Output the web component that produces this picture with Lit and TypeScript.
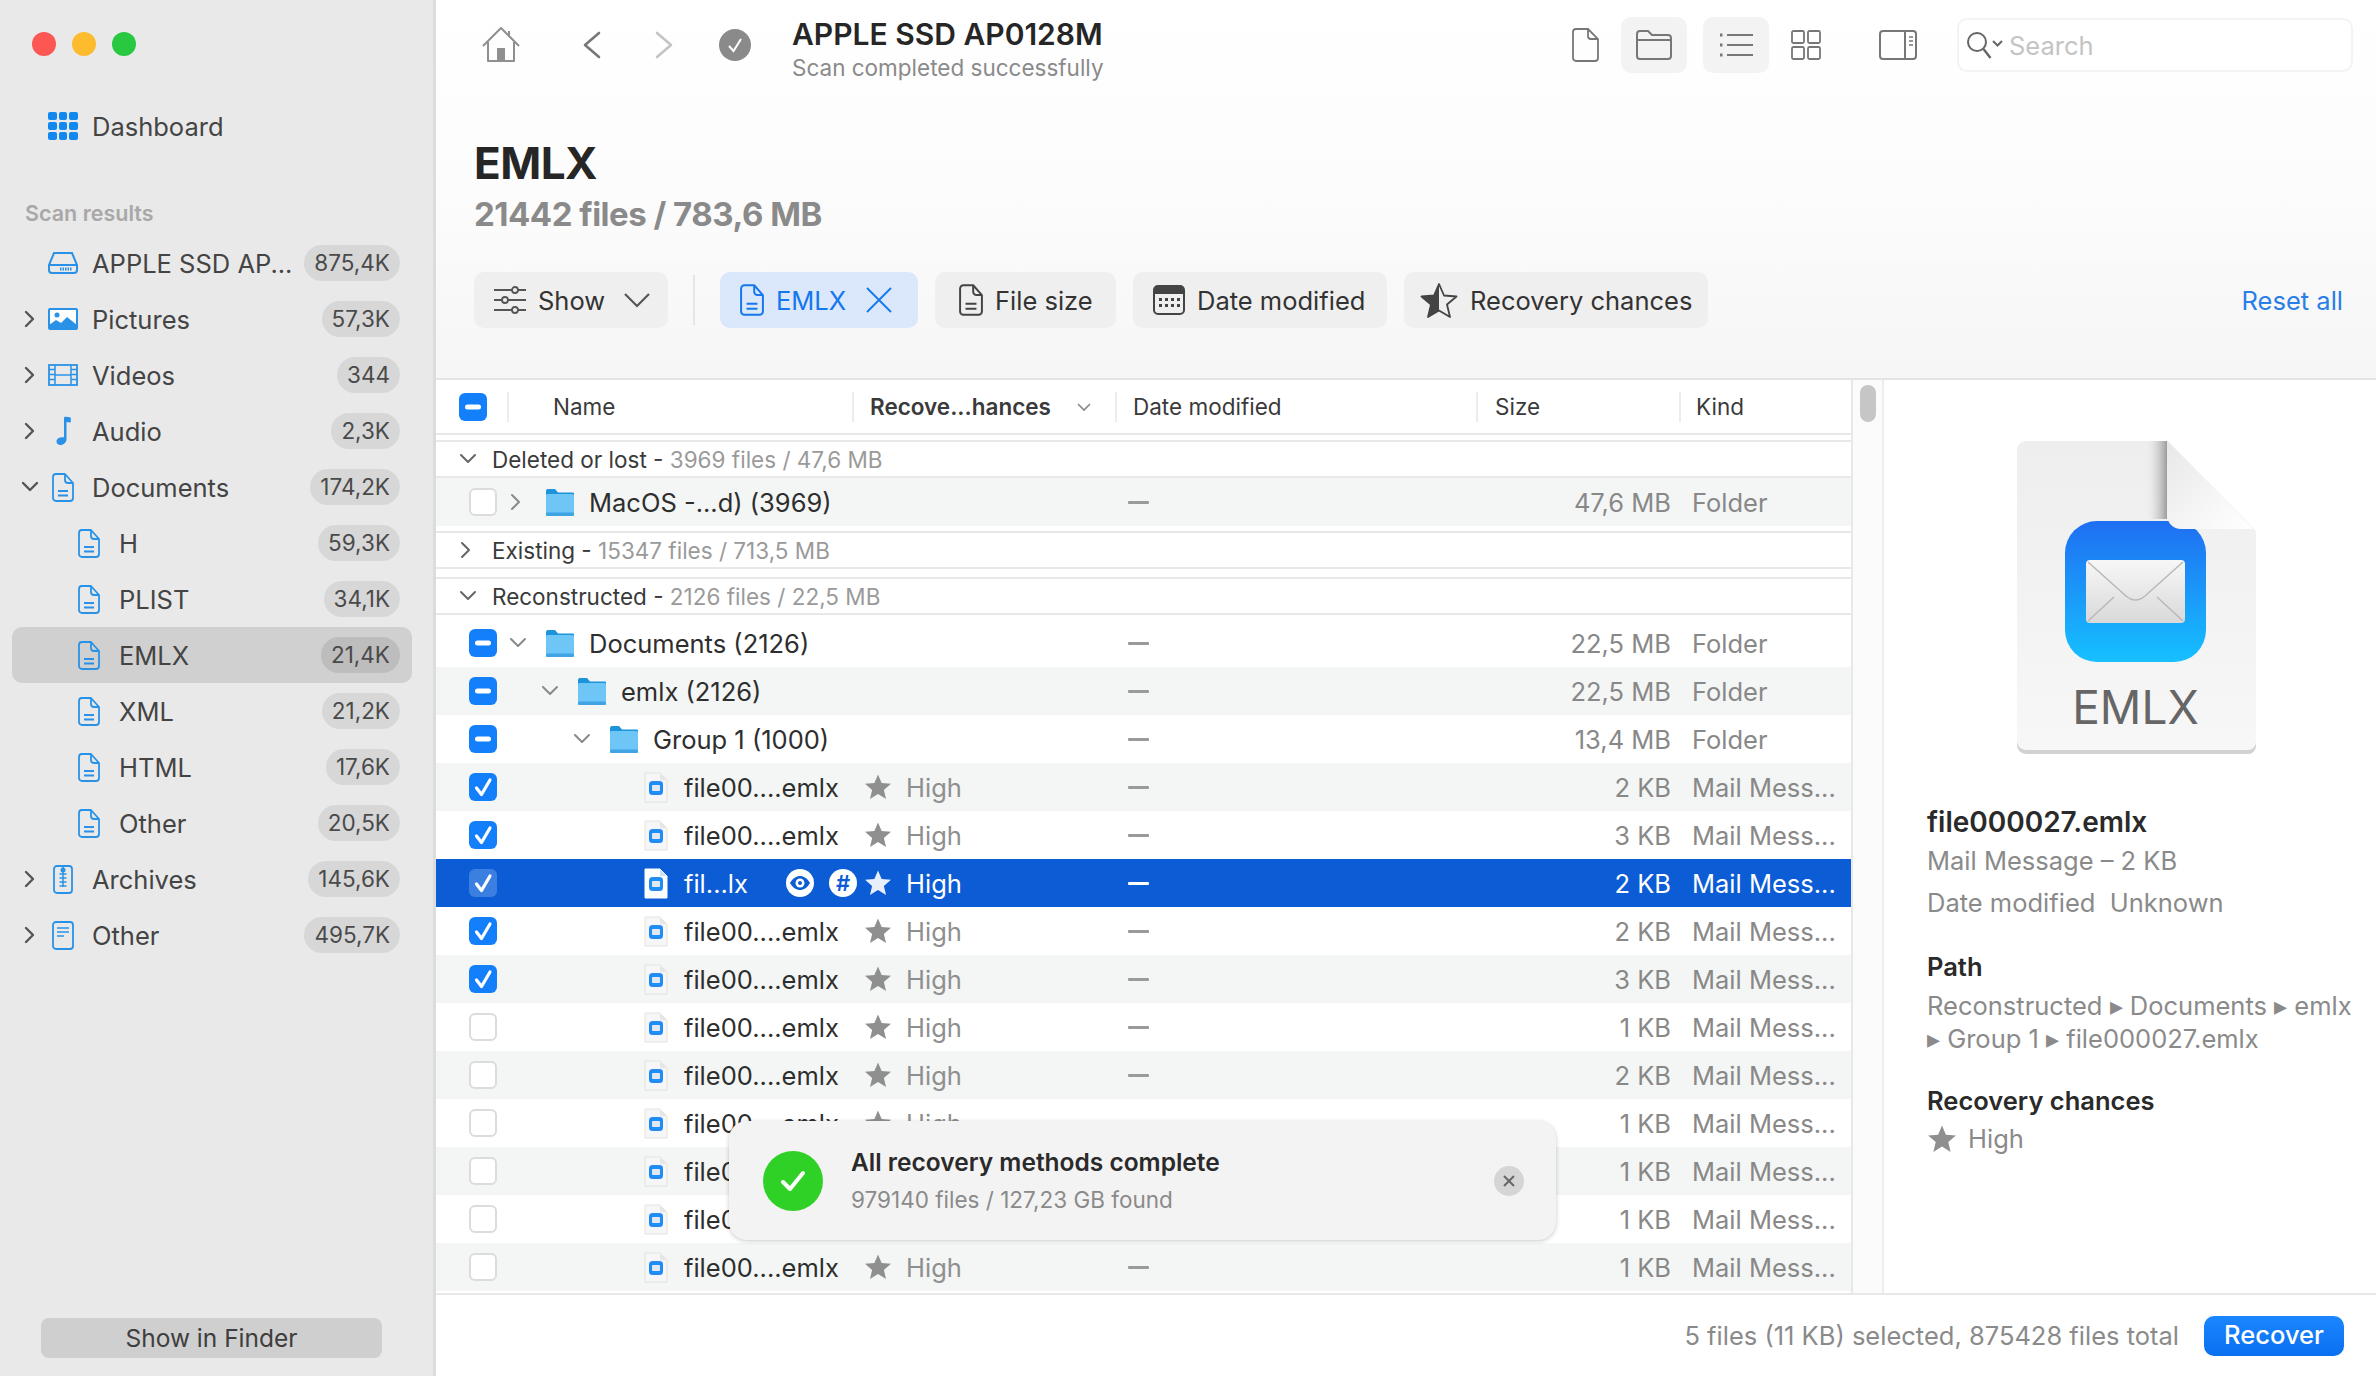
import { LitElement, html, css, svg } from "lit";
import { customElement } from "lit/decorators.js";

const chevR = (c = "#555", w = 2.4) => html`<svg class="chev" width="14" height="18" viewBox="0 0 14 18"><path d="M3 2l7 7-7 7" fill="none" stroke=${c} stroke-width=${w} stroke-linecap="round" stroke-linejoin="round"/></svg>`;
const chevD = (c = "#555", w = 2.4) => html`<svg class="chev" width="18" height="14" viewBox="0 0 18 14"><path d="M2 3l7 7 7-7" fill="none" stroke=${c} stroke-width=${w} stroke-linecap="round" stroke-linejoin="round"/></svg>`;
const docLines = (c = "#2a92e6", w = 22, h = 29) => html`<svg width=${w} height=${h} viewBox="0 0 22 29"><path d="M4 1h9l8 9v15a3 3 0 0 1-3 3H4a3 3 0 0 1-3-3V4a3 3 0 0 1 3-3zM13 1v6a3 3 0 0 0 3 3h5M6 18h10M6 22.500h10" fill="none" stroke=${c} stroke-width="1.800" stroke-linejoin="round"/></svg>`;
const star = (c = "#8f8f8f", s = 30) => html`<svg width=${s} height=${s} viewBox="0 0 30 30"><path d="M15 1.500l3.900 9.300 10 .8-7.600 6.500 2.300 9.800L15 22.600 6.400 27.900l2.300-9.800L1.100 11.600l10-.8z" fill=${c}/></svg>`;
const folder = () => html`<svg width="30" height="29" viewBox="0 0 30 29"><path d="M1 3a2 2 0 0 1 2-2h7l3 3.500h15a1 1 0 0 1 1 1V10H1z" fill="#1d93dc"/><rect x="1" y="6" width="28" height="21" rx="1.500" fill="#6ec6f6"/><rect x="1" y="24.500" width="28" height="3.500" rx="1" fill="#3ea4e4"/></svg>`;
const mailDoc = (sel = false) => html`<svg width="24" height="31" viewBox="0 0 24 31"><path d="M1 1h15l7 7v22H1z" fill=${sel ? "#fff" : "#f6f6f6"} stroke=${sel ? "#fff" : "#e2e2e2"} stroke-width="1"/><path d="M16 1v7h7z" fill=${sel ? "#cfe0fa" : "#e6e6e6"}/><rect x="5" y="9" width="14" height="14" rx="3.500" fill="#1f8df2"/><rect x="8" y="13" width="8" height="6" rx="1" fill="#dfe9f4"/></svg>`;

type Row = { name: string; depth?: number; kind: "folder" | "file" | "sel"; check: "none" | "mix" | "on"; exp?: "r" | "d"; alt?: boolean; size: string; rec?: boolean; cut?: boolean };

const cb = (s: string, dim = false) =>
  s === "none"
    ? html`<span class="cb off"></span>`
    : s === "mix"
    ? html`<span class="cb on"><svg width="16" height="6" viewBox="0 0 16 6"><rect x="0" y="0.500" width="16" height="5" rx="2.500" fill="#fff"/></svg></span>`
    : html`<span class="cb on ${dim ? "dim" : ""}"><svg width="20" height="20" viewBox="0 0 20 20"><path d="M3.500 11l5 6.500L17 3" fill="none" stroke="#fff" stroke-width="3.200" stroke-linecap="round" stroke-linejoin="round"/></svg></span>`;

const sideRows: { label: string; n: string; icon: string; chev?: "r" | "d"; sub?: boolean; active?: boolean }[] = [
  { label: "APPLE SSD AP...", n: "875,4K", icon: "disk" },
  { label: "Pictures", n: "57,3K", icon: "pic", chev: "r" },
  { label: "Videos", n: "344", icon: "vid", chev: "r" },
  { label: "Audio", n: "2,3K", icon: "aud", chev: "r" },
  { label: "Documents", n: "174,2K", icon: "doc", chev: "d" },
  { label: "H", n: "59,3K", icon: "doc", sub: true },
  { label: "PLIST", n: "34,1K", icon: "doc", sub: true },
  { label: "EMLX", n: "21,4K", icon: "doc", sub: true, active: true },
  { label: "XML", n: "21,2K", icon: "doc", sub: true },
  { label: "HTML", n: "17,6K", icon: "doc", sub: true },
  { label: "Other", n: "20,5K", icon: "doc", sub: true },
  { label: "Archives", n: "145,6K", icon: "zip", chev: "r" },
  { label: "Other", n: "495,7K", icon: "oth", chev: "r" },
];

const sideIcon = (k: string) => {
  const B = "#2a92e6";
  switch (k) {
    case "disk": return html`<svg width="30" height="24" viewBox="0 0 30 24"><path d="M6 2h18l5 12v5a3 3 0 0 1-3 3H4a3 3 0 0 1-3-3v-5zM1.500 14h27" fill="none" stroke=${B} stroke-width="2"/><path d="M12 18h12" stroke=${B} stroke-width="3" stroke-dasharray="1.500 1"/></svg>`;
    case "pic": return html`<svg width="30" height="22" viewBox="0 0 30 22"><rect x="1" y="1" width="28" height="20" rx="1" fill="#fff" stroke=${B} stroke-width="2"/><circle cx="9" cy="7" r="2.500" fill=${B}/><path d="M1 21v-4l7-5 5 3 6-6 10 8v4z" fill=${B}/></svg>`;
    case "vid": return html`<svg width="30" height="22" viewBox="0 0 30 22"><rect x="1" y="1" width="28" height="20" fill="none" stroke=${B} stroke-width="1.800"/><path d="M7 1v20M23 1v20M7 11h16M1 5.500h6M1 10.500h6M1 15.500h6M23 5.500h6M23 10.500h6M23 15.500h6" stroke=${B} stroke-width="1.500"/></svg>`;
    case "aud": return html`<svg width="30" height="30" viewBox="0 0 30 30"><path d="M16 2c0-1 1-1.500 2-1.300l4 .6c.6.100.8.600.8 1.200v3.200c0 .7-.5 1-1.200.9L18.500 6v17c0 3.500-3 6-6 6-2.500 0-4-1.500-4-3.500 0-3 3-4.500 7.500-4.300z" fill=${B}/></svg>`;
    case "doc": return docLines(B);
    case "zip": return html`<svg width="20" height="29" viewBox="0 0 20 29"><rect x="1" y="1" width="18" height="27" rx="3" fill="none" stroke=${B} stroke-width="1.800"/><path d="M10 1v21M6.500 9h7M6.500 13h7M6.500 17h7M6.500 21h7" stroke=${B} stroke-width="1.500"/><circle cx="10" cy="5" r="2.500" fill=${B}/></svg>`;
    default: return html`<svg width="22" height="29" viewBox="0 0 22 29"><rect x="1" y="1" width="20" height="27" rx="3" fill="none" stroke=${B} stroke-width="1.800"/><path d="M5 7h12M5 11h12M5 15h7" stroke=${B} stroke-width="1.600"/></svg>`;
  }
};

const fileRow = (alt: boolean, check: string, size: string): Row => ({ name: "file00....emlx", kind: "file", depth: 3, check: check as Row["check"], alt, size, rec: true });

@customElement("app-root")
export class AppRoot extends LitElement {
  static styles = css`
    :host { display: block; width: 2376px; height: 1376px; overflow: hidden; font-family: Inter, "Liberation Sans", sans-serif; color: #2c2c2c; background: #fff; }
    * { box-sizing: border-box; }
    svg { display: block; flex: none; }
    .app { display: flex; height: 100%; }
    .side { width: 436px; flex: none; background: #e9e9e9; border-right: 3px solid #dcdcdc; display: flex; flex-direction: column; }
    .lights { display: flex; gap: 16px; margin: 32px 0 0 32px; }
    .lights i { width: 24px; height: 24px; border-radius: 50%; display: block; }
    .dash { display: flex; align-items: center; height: 56px; margin-top: 42px; padding-left: 48px; gap: 14px; font-size: 25.500px; color: #444; }
    .grid9 { width: 30px; height: 28px; display: grid; grid-template-columns: repeat(3, 1fr); gap: 2px; }
    .grid9 i { background: #1187f0; border-radius: 2px; display: block; }
    .scan { margin: 44px 0 7px 25px; height: 30px; line-height: 30px; font-size: 21.500px; font-weight: 600; color: #a8a8a8; }
    .srow { height: 56px; margin: 0 21px 0 12px; padding-right: 12px; border-radius: 10px; display: flex; align-items: center; font-size: 25.500px; color: #444; position: relative; }
    .srow.active { background: #d0d0d0; }
    .srow .ch { width: 36px; flex: none; display: flex; justify-content: center; padding-left: 0; }
    .srow .ic { width: 30px; flex: none; display: flex; justify-content: center; margin-right: 14px; }
    .srow.sub { padding-left: 66px; }
    .srow.sub .ic { width: 22px; margin-right: 19px; }
    .srow .lb { flex: 1; white-space: nowrap; }
    .badge { height: 36px; line-height: 36px; padding: 0 10px; border-radius: 18px; background: #d7d7d7; font-size: 22.500px; color: #4a4a4a; flex: none; }
    .srow.active .badge { background: #bdbdbd; }
    .finder { margin: auto 51px 18px 41px; height: 40px; line-height: 40px; text-align: center; border-radius: 8px; background: #cfcfcf; font-size: 24.500px; color: #3e3e3e; }

    .main { flex: 1; min-width: 0; display: flex; flex-direction: column; position: relative; }
    .head { height: 380px; flex: none; background: linear-gradient(#fff 0%, #fcfcfc 50%, #f6f6f6 100%); border-bottom: 2px solid #e4e4e4; display: flex; flex-direction: column; padding-left: 38px; }
    .tb { height: 90px; flex: none; display: flex; align-items: center; margin-left: -38px; padding-left: 46px; }
    .tb .titles { margin-left: 41px; padding-top: 6px; width: 780px; }
    .t1 { font-size: 30px; font-weight: 600; color: #262626; line-height: 40px; white-space: nowrap; }
    .t2 { font-size: 22.500px; color: #8a8a8a; line-height: 28px; white-space: nowrap; }
    .nav { display: flex; align-items: center; }
    .tbtn { width: 66px; height: 56px; border-radius: 10px; display: flex; align-items: center; justify-content: center; }
    .tbtn.on { background: #f3f3f3; }
    .search { width: 396px; height: 54px; border: 2px solid #f3f3f3; border-radius: 10px; display: flex; align-items: center; padding-left: 7px; gap: 5px; font-size: 25.500px; color: #c4c4c4; margin-left: 40px; background: #fff; }
    h1 { margin: 46px 0 0; font-size: 44px; line-height: 54px; font-weight: 700; color: #262626; letter-spacing: -0.5px; }
    .sub2 { font-size: 33px; line-height: 44px; font-weight: 700; color: #8a8a8a; margin-top: 2px; letter-spacing: -0.5px; }
    .filters { display: flex; align-items: center; margin-top: 36px; height: 56px; padding-right: 33px; }
    .fb { height: 56px; border-radius: 10px; background: #efefef; display: flex; align-items: center; font-size: 25.500px; color: #333; white-space: nowrap; padding: 0 20px; gap: 12px; flex: none; margin-right: 17px; }
    .fb.blue { background: #dbe7fb; color: #1477ee; }
    .dv { width: 2px; height: 50px; background: #e6e6e6; margin: 0 25px 0 8px; flex: none; }
    .reset { margin-left: auto; font-size: 25.500px; color: #2a7fe6; }

    .body { flex: 1; min-height: 0; display: flex; }
    .tablewrap { width: 1417px; flex: none; border-right: 2px solid #e8e8e8; display: flex; flex-direction: column; overflow: hidden; }
    .thead { height: 55px; flex: none; border-bottom: 2px solid #e8e8e8; display: grid; grid-template-columns: 73px 345px 263px 361px 203px 172px; align-items: center; font-size: 22.500px; color: #3a3a3a; }
    .thead > div { height: 30px; line-height: 30px; border-right: 2px solid #ececec; white-space: nowrap; position: relative; }
    .thead .cbcell { padding-left: 23px; display: flex; align-items: center; }
    .thead .c2 { padding-left: 44px; }
    .thead .c3 { padding-left: 16px; font-weight: 600; display: flex; align-items: center; justify-content: space-between; padding-right: 24px; }
    .thead .c4 { padding-left: 16px; }
    .thead .c5 { padding-left: 17px; }
    .thead .c6 { padding-left: 15px; }
    .sec { display: flex; align-items: center; font-size: 22.500px; color: #3a3a3a; height: 38px; margin-top: 5px; border-top: 2px solid #e8e8e8; border-bottom: 2px solid #e8e8e8; padding-left: 23px; white-space: nowrap; }
    .sec .sl { width: 33px; flex: none; }
    .sec em { font-style: normal; color: #9a9a9a; }
    .row { height: 48px; flex: none; display: grid; grid-template-columns: 428px 264px 200px 343px 182px; align-items: center; font-size: 25.500px; color: #2e2e2e; white-space: nowrap; }
    .row.alt { background: #f4f5f5; }
    .row.sel { background: #0b5cd5; color: #fff; }
    .nm { display: flex; align-items: center; padding-left: 33px; }
    .cb { width: 28px; height: 28px; border-radius: 6px; display: flex; align-items: center; justify-content: center; flex: none; }
    .cb.on { background: #137ffb; }
    .cb.dim { background: #3b7fe0; }
    .cb.off { background: #fff; border: 2px solid #dcdcdc; }
    .th-cb { width: 28px; height: 28px; border-radius: 6px; background: #137ffb; display: flex; align-items: center; justify-content: center; }
    .exp { width: 48px; flex: none; padding-left: 12px; display: flex; }
    .fi { width: 30px; flex: none; margin-right: 14px; }
    .mi { width: 24px; flex: none; margin: 0 16px 0 3px; }
    .rc { display: flex; align-items: center; gap: 14px; color: #8f8f8f; }
    .sel .rc { color: #fff; }
    .dash2 { width: 21px; height: 3px; background: #9a9a9a; border-radius: 1px; }
    .sel .dash2 { background: #fff; }
    .sz { text-align: right; color: #888; }
    .kd { padding-left: 21px; color: #888; }
    .sel .sz, .sel .kd { color: #fff; }
    .pill { position: relative; }
    .bdg { width: 28px; height: 28px; border-radius: 50%; background: #fff; color: #0b5cd5; display: flex; align-items: center; justify-content: center; font-size: 22px; font-weight: 600; flex: none; }
    .seln { display: flex; align-items: center; width: 102px; flex: none; }
    .rowsclip { flex: 1; min-height: 0; overflow: hidden; }
    .scroll { width: 31px; flex: none; background: #fbfbfb; border-right: 2px solid #ededed; padding: 5px 6px 0 7px; }
    .thumb { width: 16px; height: 37px; margin-top: 0; border-radius: 8px; background: #c6c6c6; }
    .detail { flex: 1; min-width: 0; padding-left: 43px; position: relative; }
    .big { margin: 58px 0 0 88px; }
    .fname { font-size: 28px; font-weight: 600; color: #2a2a2a; line-height: 36px; margin-top: 44px; }
    .mut { font-size: 25.500px; color: #8a8a8a; line-height: 42px; white-space: nowrap; }
    .dt { font-size: 25.500px; font-weight: 600; color: #2a2a2a; line-height: 36px; }
    .p { font-size: 25.500px; color: #8a8a8a; line-height: 33px; white-space: nowrap; }
    .foot { height: 83px; flex: none; border-top: 2px solid #e8e8e8; background: #fff; display: flex; align-items: center; justify-content: flex-end; padding-right: 32px; gap: 25px; font-size: 25.500px; color: #8a8a8a; }
    .rec { width: 140px; height: 40px; border-radius: 10px; background: linear-gradient(#1a86ff, #0a70f0); color: #fff; font-weight: 500; text-align: center; line-height: 38px; font-size: 25.500px; }
    .toast { position: absolute; left: 293px; top: 1121px; width: 827px; height: 119px; border-radius: 18px; background: #f3f3f3; box-shadow: 0 1px 4px rgba(0,0,0,.22); display: flex; align-items: center; padding: 0 32px 0 34px; }
    .ok { width: 60px; height: 60px; border-radius: 50%; background: #2fd126; display: flex; align-items: center; justify-content: center; flex: none; }
    .tt { margin-left: 28px; flex: 1; }
    .tt b { display: block; font-size: 24.500px; line-height: 34px; font-weight: 600; color: #2a2a2a; }
    .tt span { display: block; font-size: 22.500px; line-height: 34px; color: #8a8a8a; margin-top: 4px; }
    .cls { width: 30px; height: 30px; border-radius: 50%; background: #d5d5d5; display: flex; align-items: center; justify-content: center; }
  `;

  row(r: Row) {
    const sel = r.kind === "sel";
    const name = r.kind === "folder"
      ? html`<span class="exp">${r.exp === "r" ? chevR("#8a8a8a", 2) : chevD("#8a8a8a", 2)}</span><span class="fi">${folder()}</span><span>${r.name}</span>`
      : html`<span class="exp"></span><span class="mi">${mailDoc(sel)}</span>${sel
          ? html`<span class="seln">fil...lx</span><span class="bdg"><svg width="22" height="16" viewBox="0 0 22 16"><path d="M1 8c3-5 6.500-7 10-7s7 2 10 7c-3 5-6.500 7-10 7S4 13 1 8z" fill="#0b5cd5"/><circle cx="11" cy="8" r="4.500" fill="#fff"/><circle cx="11" cy="8" r="2" fill="#0b5cd5"/></svg></span><span class="bdg" style="margin-left:15px">#</span>`
          : html`<span>${r.name}</span>`}`;
    return html`<div class="row ${r.alt ? "alt" : ""} ${sel ? "sel" : ""}">
      <div class="nm">${cb(r.check, sel)}<span style="width:${(r.depth ?? 0) * 32}px;flex:none"></span>${name}</div>
      <div class="rc">${r.rec ? html`${star(sel ? "#e9eefb" : "#8f8f8f", 28)}<span>High</span>` : ""}</div>
      <div><div class="dash2"></div></div>
      <div class="sz">${r.size}</div>
      <div class="kd">${r.kind === "folder" ? "Folder" : "Mail Mess..."}</div>
    </div>`;
  }

  render() {
    const G = "#777";
    const rows: Row[] = [
      { name: "Documents (2126)", kind: "folder", check: "mix", exp: "d", size: "22,5 MB" },
      { name: "emlx (2126)", kind: "folder", depth: 1, check: "mix", exp: "d", alt: true, size: "22,5 MB" },
      { name: "Group 1 (1000)", kind: "folder", depth: 2, check: "mix", exp: "d", size: "13,4 MB" },
      fileRow(true, "on", "2 KB"),
      fileRow(false, "on", "3 KB"),
      { name: "fil...lx", kind: "sel", depth: 3, check: "on", size: "2 KB", rec: true },
      fileRow(false, "on", "2 KB"),
      fileRow(true, "on", "3 KB"),
      fileRow(false, "none", "1 KB"),
      fileRow(true, "none", "2 KB"),
      fileRow(false, "none", "1 KB"),
      fileRow(true, "none", "1 KB"),
      fileRow(false, "none", "1 KB"),
      fileRow(true, "none", "1 KB"),
    ];
    return html`<div class="app">
      <aside class="side">
        <div class="lights"><i style="background:#fc5753"></i><i style="background:#fdbc2e"></i><i style="background:#28c840"></i></div>
        <div class="dash"><span class="grid9">${[...Array(9)].map(() => html`<i></i>`)}</span>Dashboard</div>
        <div class="scan">Scan results</div>
        ${sideRows.map((s) => html`<div class="srow ${s.sub ? "sub" : ""} ${s.active ? "active" : ""}">
          ${s.sub ? "" : html`<span class="ch">${s.chev === "r" ? chevR() : s.chev === "d" ? chevD() : ""}</span>`}
          <span class="ic">${sideIcon(s.icon)}</span><span class="lb">${s.label}</span><span class="badge">${s.n}</span></div>`)}
        <div class="finder">Show in Finder</div>
      </aside>
      <main class="main">
        <div class="head">
          <div class="tb">
            <div class="nav">
              <svg width="38" height="38" viewBox="0 0 38 38"><path d="M1 20L19 2l18 18M6 16v19h26V16M27 5v6" fill="none" stroke="#8f8f8f" stroke-width="2" stroke-linejoin="round"/><rect x="15" y="22" width="8" height="13" fill="#8f8f8f"/></svg>
              <svg style="margin-left:62px" width="20" height="28" viewBox="0 0 20 28"><path d="M17 2L3 14l14 12" fill="none" stroke="#777" stroke-width="2.600" stroke-linecap="round" stroke-linejoin="round"/></svg>
              <svg style="margin-left:52px" width="20" height="28" viewBox="0 0 20 28"><path d="M3 2l14 12L3 26" fill="none" stroke="#c4c4c4" stroke-width="2.600" stroke-linecap="round" stroke-linejoin="round"/></svg>
              <svg style="margin-left:45px" width="32" height="32" viewBox="0 0 32 32"><circle cx="16" cy="16" r="16" fill="#8a8a8a"/><path d="M10 17l4.500 5L22 10" fill="none" stroke="#fff" stroke-width="2"/></svg>
            </div>
            <div class="titles"><div class="t1">APPLE SSD AP0128M</div><div class="t2">Scan completed successfully</div></div>
            <svg width="27" height="34" viewBox="0 0 27 34"><path d="M4 1h12l10 10v19a3 3 0 0 1-3 3H4a3 3 0 0 1-3-3V4a3 3 0 0 1 3-3zM16 1v7a3 3 0 0 0 3 3h7" fill="none" stroke=${G} stroke-width="1.800"/></svg>
            <div class="tbtn on" style="margin-left:22px"><svg width="36" height="30" viewBox="0 0 36 30"><path d="M1 4a3 3 0 0 1 3-3h8l4 4h16a3 3 0 0 1 3 3v18a3 3 0 0 1-3 3H4a3 3 0 0 1-3-3zM1 10h34" fill="none" stroke=${G} stroke-width="2"/></svg></div>
            <div class="tbtn on" style="margin-left:16px"><svg width="34" height="26" viewBox="0 0 34 26"><path d="M8 3h26M8 13h26M8 23h26" stroke=${G} stroke-width="2.200"/><path d="M1 3h2.500M1 13h2.500M1 23h2.500" stroke=${G} stroke-width="3"/></svg></div>
            <svg style="margin-left:22px" width="30" height="30" viewBox="0 0 30 30"><g fill="none" stroke=${G} stroke-width="1.800"><rect x="1" y="1" width="12" height="12" rx="1.500"/><rect x="17" y="1" width="12" height="12" rx="1.500"/><rect x="1" y="17" width="12" height="12" rx="1.500"/><rect x="17" y="17" width="12" height="12" rx="1.500"/></g></svg>
            <svg style="margin-left:58px" width="38" height="30" viewBox="0 0 38 30"><rect x="1" y="1" width="36" height="28" rx="3" fill="none" stroke=${G} stroke-width="2"/><path d="M26 1v28" stroke=${G} stroke-width="2"/><path d="M30 7h4M30 11h4M30 15h4" stroke=${G} stroke-width="1.600"/></svg>
            <div class="search"><svg width="38" height="28" viewBox="0 0 38 28"><circle cx="11" cy="11" r="9" fill="none" stroke="#666" stroke-width="2"/><path d="M17.500 18l7 9" stroke="#666" stroke-width="2.400"/><path d="M27 10l4.500 4.500L36 10" fill="none" stroke="#666" stroke-width="2"/></svg>Search</div>
          </div>
          <h1>EMLX</h1>
          <div class="sub2">21442 files / 783,6 MB</div>
          <div class="filters">
            <div class="fb" style="width:194px"><svg width="32" height="28" viewBox="0 0 32 28"><path d="M0 4h18M24 4h8M0 14h8M14 14h18M0 24h18M24 24h8" stroke="#555" stroke-width="1.800"/><g fill="none" stroke="#555" stroke-width="1.800"><circle cx="21" cy="4" r="3"/><circle cx="11" cy="14" r="3"/><circle cx="21" cy="24" r="3"/></g></svg>Show<svg style="margin-left:6px" width="28" height="16" viewBox="0 0 28 16"><path d="M2 2l12 12L26 2" fill="none" stroke="#555" stroke-width="2.200"/></svg></div>
            <div class="dv"></div>
            <div class="fb blue" style="width:198px">${docLines("#1477ee", 24, 32)}EMLX<svg style="margin-left:7px" width="28" height="28" viewBox="0 0 28 28"><path d="M2 2l24 24M26 2L2 26" stroke="#1477ee" stroke-width="1.800"/></svg></div>
            <div class="fb" style="width:181px;padding-left:24px">${docLines("#444", 24, 32)}File size</div>
            <div class="fb" style="width:254px;padding-left:20px"><svg width="32" height="30" viewBox="0 0 32 30"><rect x="1" y="1" width="30" height="28" rx="4" fill="none" stroke="#444" stroke-width="2"/><path d="M1 5a4 4 0 0 1 4-4h22a4 4 0 0 1 4 4v4H1z" fill="#444"/><g fill="#444"><rect x="6" y="13" width="3" height="3"/><rect x="12" y="13" width="3" height="3"/><rect x="18" y="13" width="3" height="3"/><rect x="24" y="13" width="3" height="3"/><rect x="6" y="19" width="3" height="3"/><rect x="12" y="19" width="3" height="3"/><rect x="18" y="19" width="3" height="3"/><rect x="24" y="19" width="3" height="3"/></g></svg>Date modified</div>
            <div class="fb" style="width:304px;padding-left:16px"><svg width="38" height="36" viewBox="0 0 38 36"><path d="M19 2l5 11.500 12.500 1-9.500 8 3 12.500L19 28.500 8 35l3-12.500-9.500-8 12.500-1z" fill="#efefef" stroke="#444" stroke-width="1.800" stroke-linejoin="round"/><path d="M19 2v26.500L8 35l3-12.500-9.500-8 12.500-1z" fill="#444"/></svg>Recovery chances</div>
            <div class="reset">Reset all</div>
          </div>
        </div>
        <div class="body">
          <div class="tablewrap">
            <div class="thead">
              <div class="cbcell"><span class="th-cb"><svg width="16" height="6" viewBox="0 0 16 6"><rect y="0.500" width="16" height="5" rx="2.500" fill="#fff"/></svg></span></div>
              <div class="c2">Name</div>
              <div class="c3">Recove...hances<svg width="14" height="10" viewBox="0 0 14 10"><path d="M1 2l6 6 6-6" fill="none" stroke="#888" stroke-width="1.600"/></svg></div>
              <div class="c4">Date modified</div>
              <div class="c5">Size</div>
              <div class="c6">Kind</div>
            </div>
            <div class="rowsclip">
              <div class="sec"><span class="sl">${chevD("#666", 2)}</span><span>Deleted or lost - <em>3969 files / 47,6 MB</em></span></div>
              ${this.row({ name: "MacOS -...d) (3969)", kind: "folder", check: "none", exp: "r", alt: true, size: "47,6 MB" })}
              <div class="sec"><span class="sl">${chevR("#666", 2)}</span><span>Existing - <em>15347 files / 713,5 MB</em></span></div>
              <div class="sec" style="margin-top:8px"><span class="sl">${chevD("#666", 2)}</span><span>Reconstructed - <em>2126 files / 22,5 MB</em></span></div>
              <div style="height:4px"></div>
              ${rows.map((r) => this.row(r))}
            </div>
          </div>
          <div class="scroll"><div class="thumb"></div></div>
          <div class="detail">
            <div class="big">
              <svg width="244" height="322" viewBox="0 0 244 322">
                <defs>
                  <linearGradient id="bl" x1="0" y1="0" x2="0" y2="1"><stop offset="0" stop-color="#1f6ff2"/><stop offset="1" stop-color="#16c0ff"/></linearGradient>
                  <linearGradient id="pg" x1="0" y1="0" x2="0" y2="1"><stop offset="0" stop-color="#eeeeee"/><stop offset="1" stop-color="#f7f7f7"/></linearGradient>
                  <linearGradient id="fo" x1="0" y1="0" x2="1" y2="1"><stop offset="0" stop-color="#e8e8e8"/><stop offset="1" stop-color="#ffffff"/></linearGradient>
                  <linearGradient id="sh" x1="0" y1="0" x2="1" y2="0"><stop offset="0" stop-color="#eee" stop-opacity="0"/><stop offset="1" stop-color="#9c9c9c"/></linearGradient>
                  <linearGradient id="ev" x1="0" y1="0" x2="0" y2="1"><stop offset="0" stop-color="#f7f7f7"/><stop offset="1" stop-color="#d9d9d9"/></linearGradient>
                </defs>
                <path d="M2 12a9 9 0 0 1 9-9h142l88 90v211a8 8 0 0 1-8 8H11a9 9 0 0 1-9-9z" fill="#d2d2d2" transform="translate(0 4)"/>
                <path d="M2 12a9 9 0 0 1 9-9h142l88 90v211a8 8 0 0 1-8 8H11a9 9 0 0 1-9-9z" fill="url(#pg)"/>
                <rect x="130" y="3" width="22" height="78" fill="url(#sh)"/>
                <rect x="50" y="83" width="141" height="141" rx="32" fill="url(#bl)"/>
                <path d="M152 3l86 88H166a14 14 0 0 1-14-14z" fill="url(#fo)"/>
                <rect x="71" y="122" width="99" height="63" rx="4" fill="url(#ev)"/>
                <path d="M73 124l38 34q9.500 8 19 0l38-34M73 183l26-24M168 183l-26-24" fill="none" stroke="#b9b9b9" stroke-width="1.500"/>
                <text x="120.500" y="286" text-anchor="middle" font-family="Inter, sans-serif" font-size="46" fill="#666">EMLX</text>
              </svg>
            </div>
            <div class="fname">file000027.emlx</div>
            <div class="mut">Mail Message – 2 KB</div>
            <div class="mut">Date modified&nbsp; Unknown</div>
            <div class="dt" style="margin-top:25px">Path</div>
            <div class="p" style="margin-top:4px">Reconstructed ▸ Documents ▸ emlx</div>
            <div class="p">▸ Group 1 ▸ file000027.emlx</div>
            <div class="dt" style="margin-top:28px">Recovery chances</div>
            <div class="rc" style="margin-top:4px;gap:11px;font-size:25.500px;color:#8a8a8a">${star("#8f8f8f", 30)}<span>High</span></div>
          </div>
        </div>
        <div class="foot"><span>5 files (11 KB) selected, 875428 files total</span><div class="rec">Recover</div></div>
        <div class="toast">
          <div class="ok"><svg width="28" height="24" viewBox="0 0 28 24"><path d="M4 13l7 7L24 4" fill="none" stroke="#fff" stroke-width="4" stroke-linecap="round" stroke-linejoin="round"/></svg></div>
          <div class="tt"><b>All recovery methods complete</b><span>979140 files / 127,23 GB found</span></div>
          <div class="cls"><svg width="14" height="14" viewBox="0 0 14 14"><path d="M2 2l10 10M12 2L2 12" stroke="#666" stroke-width="2"/></svg></div>
        </div>
      </main>
    </div>`;
  }
}
